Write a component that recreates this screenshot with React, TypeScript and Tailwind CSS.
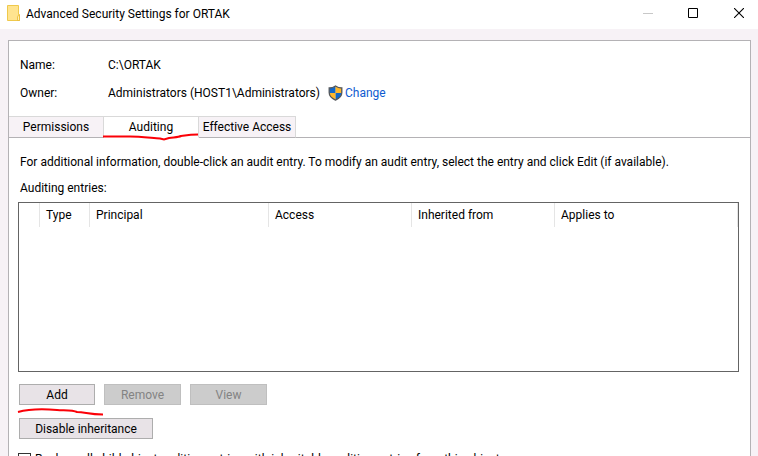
import { useState } from 'react';
import clsx from 'clsx';

const tabs = [
  { name: 'Permissions', width: 'w-[95px]' },
  { name: 'Auditing', width: 'w-[95px]' },
  { name: 'Effective Access', width: 'w-[97px]' },
];

const columns = [
  { name: '', width: 'w-[21px]' },
  { name: 'Type', width: 'w-[50px]' },
  { name: 'Principal', width: 'w-[179px]' },
  { name: 'Access', width: 'w-[143px]' },
  { name: 'Inherited from', width: 'w-[143px]' },
  { name: 'Applies to', width: '' },
];

const buttonStyle =
  'h-[21px] border border-[#adadad] bg-[#e8e3e7] leading-none disabled:border-[#bfbfbf] disabled:bg-[#cccccc] disabled:text-[#838383]';

const FolderIcon = () => (
  <svg width="14" height="17" viewBox="0 0 14 17" className="mb-[2px]" aria-hidden="true">
    <path d="M0.5 0.5h11v9h1v6h-12z" fill="#ffe48f" stroke="#efc94c" />
    <path d="M10.5 15.5v-3.500l1-2h1v5.500z" fill="#fff0b8" stroke="#e8b931" strokeWidth="0.8" />
  </svg>
);

const ShieldIcon = () => (
  <svg width="15" height="16" viewBox="0 0 15 16" aria-hidden="true">
    <path d="M7.500 1C5.500 2.500 3.500 3 1.200 3v4.500c0 3.500 2.600 6 6.300 7.600z" fill="#1167c9" />
    <path d="M7.500 1c2 1.500 4 2 6.300 2v4.500c0 3.500-2.600 6-6.300 7.600z" fill="#1167c9" />
    <path d="M7.500 1c2 1.500 4 2 6.300 2v5H7.500z" fill="#fdb72b" />
    <path d="M7.500 8H1.200c.2 3.300 2.700 5.600 6.300 7.100z" fill="#fdb72b" />
    <path d="M7.500 1C5.500 2.500 3.500 3 1.200 3v4.500c0 3.500 2.600 6 6.300 7.600 3.700-1.600 6.300-4.100 6.300-7.600V3c-2.300 0-4.300-.5-6.300-2z" fill="none" stroke="#55585c" strokeWidth="1.300" />
  </svg>
);

const TitleBar = () => (
  <header className="flex h-[29px] shrink-0 items-center bg-white pl-[7px]">
    <FolderIcon />
    <h1 className="ml-[5px] flex-1 pb-px">Advanced Security Settings for ORTAK</h1>
    <button aria-label="Minimize" disabled className="flex h-full w-[44px] items-center justify-center pb-[3px]">
      <svg width="10" height="10" viewBox="0 0 10 10">
        <path d="M0 5.5h10" stroke="#c8c8c8" />
      </svg>
    </button>
    <button aria-label="Maximize" className="flex h-full w-[46px] items-center justify-center pb-[3px]">
      <svg width="10" height="10" viewBox="0 0 10 10">
        <path d="M0.500 0.500h9v9h-9z" fill="none" stroke="#000" />
      </svg>
    </button>
    <button aria-label="Close" className="mr-[-4px] flex h-full w-[46px] items-center justify-center pb-[3px]">
      <svg width="10" height="10" viewBox="0 0 10 10">
        <path d="M0 0l10 10M10 0L0 10" stroke="#000" strokeWidth="1.100" />
      </svg>
    </button>
  </header>
);

export default function App() {
  const [active, setActive] = useState('Auditing');
  const [replace, setReplace] = useState(false);

  return (
    <div className="flex h-screen flex-col overflow-hidden bg-[#f7f2f6] font-[Roboto,'Open_Sans',sans-serif] text-[12px] leading-4 text-black">
      <TitleBar />

      <main className="mt-[11px] mr-[7px] ml-2 flex-1 border border-b-0 border-[#b4b2b5] bg-white">
        <dl className="grid grid-cols-[88px_1fr] gap-y-3 pt-4 pb-[15px] pl-[11px]">
          <dt>Name:</dt>
          <dd>C:\ORTAK</dd>
          <dt>Owner:</dt>
          <dd className="flex items-center">
            Administrators (HOST1\Administrators)
            <a href="#change" className="ml-2 flex items-center gap-[2px] text-[#0f5bd0]">
              <ShieldIcon />
              Change
            </a>
          </dd>
        </dl>

        <div role="tablist" className="relative flex">
          {tabs.map((t) => (
            <button
              key={t.name}
              role="tab"
              aria-selected={active === t.name}
              onClick={() => setActive(t.name)}
              className={clsx(
                'h-[22px] border-t border-r border-b border-t-[#d9d9d9] border-r-[#d9d9d9] whitespace-nowrap',
                t.width,
                active === t.name ? 'border-b-white bg-white' : 'border-b-[#b4b2b5] bg-[#f7f2f6]',
              )}
            >
              {t.name}
            </button>
          ))}
          <div className="flex-1 border-b border-[#b4b2b5]" />
          {/* Pen stroke under the tab */}
          <svg className="pointer-events-none absolute top-[16px] left-[93px]" width="98" height="10" viewBox="0 0 98 10" fill="none">
            <path d="M1 4.500H28C38 4.500 50 6 58 6.500L62 7.500L67 6C75 5 77 5 79 4C84 3.500 85 2.500 96 2.500" stroke="#fb0007" strokeWidth="2" />
          </svg>
        </div>

        <section role="tabpanel" aria-label={active} className="pr-[11px] pl-[9px]">
          <p className="mt-4 pl-[2px] whitespace-nowrap">
            For additional information, double-click an audit entry. To modify an audit entry, select the entry and click Edit (if available).
          </p>
          <h2 id="entries" className="mt-[10px] pl-[2px]">Auditing entries:</h2>

          <div className="mt-[6px] h-[170px] border border-[#646464]">
            <table aria-labelledby="entries" className="w-full table-fixed border-separate border-spacing-0">
              <thead>
                <tr className="h-6">
                  {columns.map((c) => (
                    <th key={c.name} scope="col" className={clsx('border-r border-[#e5e5e5] pl-[6px] text-left font-normal', c.width)}>
                      {c.name}
                    </th>
                  ))}
                </tr>
              </thead>
              <tbody />
            </table>
          </div>

          <div className="relative mt-3 flex gap-[9px] pl-px">
            <button className={clsx(buttonStyle, 'w-[76px]')}>Add</button>
            <button disabled className={clsx(buttonStyle, 'w-[77px]')}>Remove</button>
            <button disabled className={clsx(buttonStyle, 'w-[77px]')}>View</button>
            {/* Pen stroke under Add */}
            <svg className="pointer-events-none absolute top-[23px] left-[-1px]" width="88" height="10" viewBox="0 0 88 10" fill="none">
              <path d="M1 5C12 2 28 2 40 3C48 3.500 56 3 60 5C68 5 72 7.500 86 7.500" stroke="#fb0007" strokeWidth="2" />
            </svg>
          </div>
          <div className="mt-[13px] pl-px">
            <button className={clsx(buttonStyle, 'w-[134px]')}>Disable inheritance</button>
          </div>

          <label className="mt-3 flex items-center gap-1 whitespace-nowrap">
            <input
              type="checkbox"
              checked={replace}
              onChange={(e) => setReplace(e.target.checked)}
              className="size-[13px] shrink-0 appearance-none border border-[#333333] bg-white checked:bg-[#333333]"
            />
            Replace all child object auditing entries with inheritable auditing entries from this object
          </label>
        </section>
      </main>
    </div>
  );
}
